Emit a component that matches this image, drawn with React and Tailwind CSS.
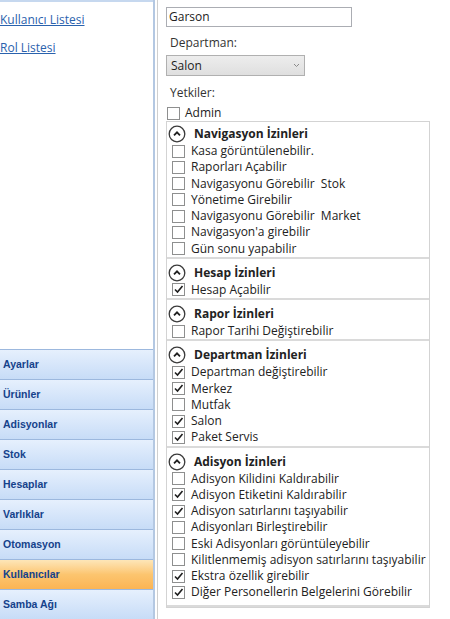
import React from 'react';

const groups = [
  {
    title: 'Navigasyon İzinleri',
    items: [
      ['Kasa görüntülenebilir.', false],
      ['Raporları Açabilir', false],
      ['Navigasyonu Görebilir  Stok', false],
      ['Yönetime Girebilir', false],
      ['Navigasyonu Görebilir  Market', false],
      ["Navigasyon'a girebilir", false],
      ['Gün sonu yapabilir', false],
    ],
  },
  { title: 'Hesap İzinleri', items: [['Hesap Açabilir', true]] },
  { title: 'Rapor İzinleri', items: [['Rapor Tarihi Değiştirebilir', false]] },
  {
    title: 'Departman İzinleri',
    items: [
      ['Departman değiştirebilir', true],
      ['Merkez', true],
      ['Mutfak', false],
      ['Salon', true],
      ['Paket Servis', true],
    ],
  },
  {
    title: 'Adisyon İzinleri',
    items: [
      ['Adisyon Kilidini Kaldırabilir', false],
      ['Adisyon Etiketini Kaldırabilir', true],
      ['Adisyon satırlarını taşıyabilir', true],
      ['Adisyonları Birleştirebilir', false],
      ['Eski Adisyonları görüntüleyebilir', false],
      ['Kilitlenmemiş adisyon satırlarını taşıyabilir', false],
      ['Ekstra özellik girebilir', true],
      ['Diğer Personellerin Belgelerini Görebilir', true],
    ],
  },
];

const navItems = ['Ayarlar', 'Ürünler', 'Adisyonlar', 'Stok', 'Hesaplar', 'Varlıklar', 'Otomasyon', 'Kullanıcılar', 'Samba Ağı'];

const CheckBox = ({ checked }) => (
  <span className="w-[13px] h-[13px] shrink-0 border border-[#8e8f8f] bg-white flex items-center justify-center">
    {checked && (
      <svg width="11" height="11" viewBox="0 0 11 11">
        <path d="M2 5.5 L4.5 8 L9.5 2" fill="none" stroke="#1e1e1e" strokeWidth="1.6" />
      </svg>
    )}
  </span>
);

const CollapseIcon = () => (
  <svg width="18" height="18" viewBox="0 0 18 18" className="shrink-0">
    <circle cx="9" cy="9" r="7.8" fill="white" stroke="#3a3a3a" strokeWidth="1.3" />
    <path d="M6 10.3 L9 7.3 L12 10.3" fill="none" stroke="#1e1e1e" strokeWidth="1.8" />
  </svg>
);

export default function App() {
  return (
    <div className="flex h-[619px] w-[450px] bg-white overflow-hidden text-[#222] font-['Open_Sans',sans-serif] text-[12px]">
      {/* sidebar */}
      <div className="w-[155px] shrink-0 flex flex-col border-r-2 border-[#b4c8e2]">
        <div className="flex-1 border-t-2 border-[#c6d8ef] flex flex-col">
          <a className="mt-[9px] h-[18px] leading-[18px] underline text-[#2a62ad] whitespace-nowrap">Kullanıcı Listesi</a>
          <a className="mt-[10px] h-[18px] leading-[18px] underline text-[#2a62ad] whitespace-nowrap">Rol Listesi</a>
        </div>
        <div className="flex flex-col">
          {navItems.map((n) => (
            <div
              key={n}
              className={`h-[30px] border-t border-[#9cb8de] flex items-center pl-[3px] font-['Liberation_Sans',sans-serif] font-bold text-[10.5px] text-[#15428b] ${
                n === 'Kullanıcılar'
                  ? 'bg-gradient-to-b from-[#fde6b8] via-[#fcc56f] to-[#fbb453]'
                  : 'bg-gradient-to-b from-[#e6f0fd] to-[#c7dcf7]'
              }`}
            >
              {n}
            </div>
          ))}
        </div>
      </div>

      <div className="w-[2px] shrink-0" />

      {/* content */}
      <div className="flex-1 border-l border-[#cfcfcf] pl-[8px] flex flex-col">
        <div className="mt-[7px] w-[186px] h-[20px] border border-[#abadb3] pl-[2px] leading-[18px]">Garson</div>
        <div className="mt-[8px] h-[16px] leading-[16px] pl-[4px] text-[#333]">Departman:</div>
        <div className="mt-[4px] w-[139px] h-[21px] border border-[#b0b0b0] bg-gradient-to-b from-[#ededed] to-[#dfdfdf] flex items-center justify-between pl-[4px] pr-[4px]">
          <span>Salon</span>
          <svg width="7" height="5" viewBox="0 0 7 5">
            <path d="M1 1 L3.5 3.5 L6 1" fill="none" stroke="#8a8a8a" strokeWidth="1" />
          </svg>
        </div>
        <div className="mt-[9px] h-[16px] leading-[16px] pl-[4px] text-[#333]">Yetkiler:</div>
        <div className="mt-[4px] h-[16px] flex items-center gap-[5px] pl-[1px]">
          <CheckBox checked={false} />
          <span className="leading-[16px]">Admin</span>
        </div>
        <div className="w-[264px] border border-[#d3d3d3] flex flex-col">
          {groups.map((g, gi) => (
            <div
              key={g.title}
              className={`${gi === 0 ? 'pt-[3px]' : 'pt-[5px] border-t-2 border-[#dadada]'} ${gi === groups.length - 1 ? 'pb-[4px] border-b-2 border-[#dadada]' : ''}`}
            >
              <div className="h-[18px] flex items-center gap-[8px] pl-[1px]">
                <CollapseIcon />
                <span className="font-bold whitespace-nowrap">{g.title}</span>
              </div>
              {g.items.map(([label, checked]) => (
                <div key={label} className="h-[16.25px] flex items-center gap-[6px] pl-[5px]">
                  <CheckBox checked={checked} />
                  <span className="whitespace-pre leading-[16px]">{label}</span>
                </div>
              ))}
            </div>
          ))}
        </div>
      </div>
    </div>
  );
}
